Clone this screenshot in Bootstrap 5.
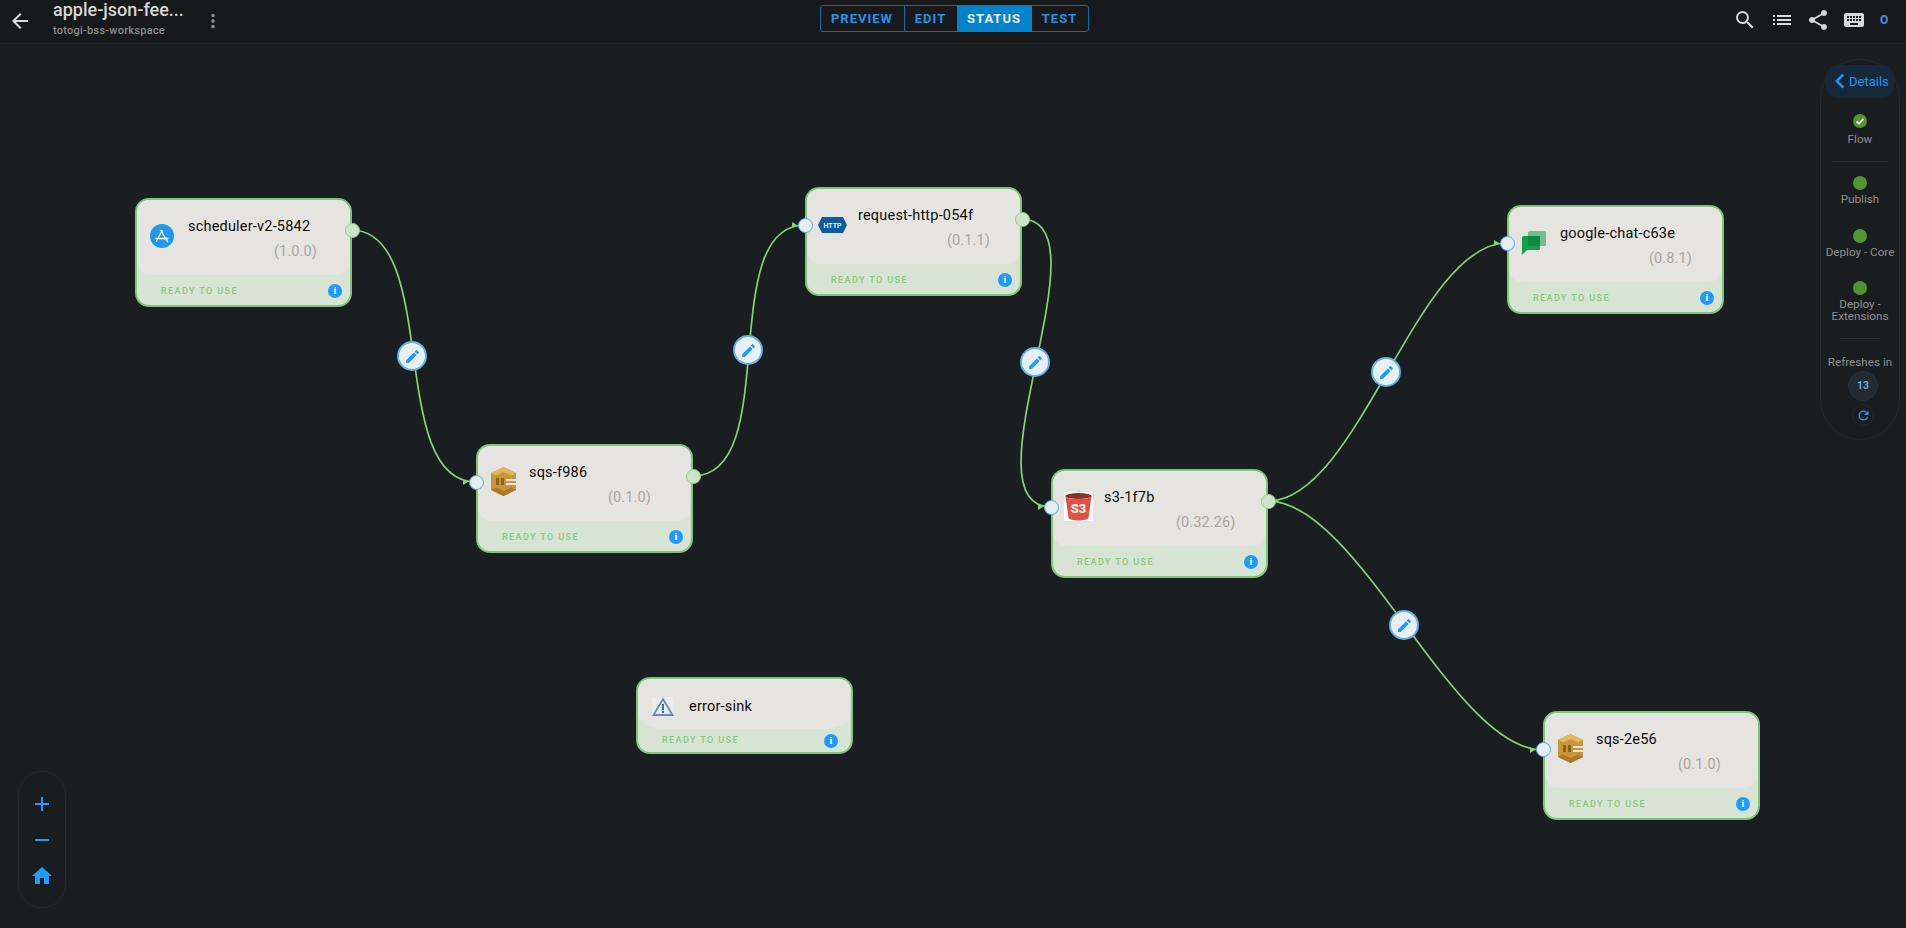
<!DOCTYPE html>
<html lang="en">
<head>
<meta charset="utf-8">
<title>apple-json-feed</title>
<link href="https://cdn.jsdelivr.net/npm/bootstrap@5.3.0/dist/css/bootstrap.min.css" rel="stylesheet">
<style>
html,body{height:100%;overflow:hidden}
body{background:#1b1e20;font-family:Roboto,"Liberation Sans",sans-serif;color:#ddd}
.topbar{height:44px;background:#17191b;border-bottom:1px solid #25282a;flex:none}
.top-side{flex:1 1 0;min-width:0}
.left-side{margin-top:-2px}
.back-btn{width:24px;height:24px;margin-left:8px;color:#dcdcdc}
.app-head{margin-left:21px;width:147px}
.app-name{font-size:18px;font-weight:500;line-height:20px;color:#d6d6d6;margin-top:-4px;white-space:nowrap}
.app-space{font-size:11px;font-weight:500;letter-spacing:.25px;line-height:14px;color:#8c8c8c;margin-top:4px;white-space:nowrap}
.more-btn{width:22px;height:22px;color:#8d8d8d;margin-left:2px}
.mode-group{margin-left:18px;margin-top:-7px}
.mode-group .btn{font-size:13px;font-weight:700;letter-spacing:1px;color:#2392e6;border-color:#0b6ea8;background:transparent;padding:0;height:27px;line-height:25px;border-radius:3px;box-shadow:none}
.mode-group .btn.active{background:#0382cc;border-color:#0382cc;color:#e8f0f6}
.w-preview{width:85px}.w-edit{width:54px}.w-status{width:75px}.w-test{width:58px}
.top-icons{gap:12px;padding-right:16px;color:#d8d8d8;margin-top:-4px}
.top-icons svg{width:24px;height:24px;display:block}
.top-icons svg.search-ico{margin-right:1px}
.user-mark{font-size:12px;font-weight:700;color:#4d8fe8;width:10px;margin-left:2px}
.canvas{position:relative;flex:1 1 auto;overflow:hidden;background:#1b1e20}
.edges{position:absolute;left:0;top:0;width:1906px;height:884px}
.flow-node{position:absolute;width:217px;height:109px;background:#d8e4d3;border:2px solid #7cc576;border-radius:14px;color:#0c0c0c}
.node-top{height:75px;background:#e6e4e0;border-radius:12px 12px 14px 14px;padding:0 0 0 10px}
.node-low{height:30px;padding:2px 8px 0 24px}
.n-icon{width:30px;height:100%;margin-right:11px;padding-bottom:4px}
.n-title{font-size:14.5px;line-height:18px;letter-spacing:.2px;margin-top:18px;white-space:nowrap}
.n-ver{font-size:14.5px;line-height:18px;letter-spacing:.1px;color:#aaa6a2;margin-top:7px;white-space:nowrap}
.ready{font-size:9px;font-weight:500;letter-spacing:1.4px;color:#86c97f;line-height:12px}
.info-dot{width:14px;height:14px;border-radius:50%;background:#1e9bff;color:#fff;font:700 10px/14px "Liberation Serif",serif;text-align:center}
.port{position:absolute;width:15px;height:15px;border-radius:50%;z-index:2}
.port-out{right:-9.5px;top:22.5px;background:#cfe3c9;border:1.5px solid #8fce87}
.port-in{left:-9.5px;top:28.5px;background:#e6eef2;border:1.5px solid #56a8e0}
.edit-btn{position:absolute;width:30px;height:30px;border-radius:50%;background:#e8f0f6;border:2px solid #5fb0ea;color:#1e9bff}
.edit-btn svg{width:17px;height:17px}
.error-node{height:77px}
.error-node .node-top{height:50px;border-radius:12px 12px 30px 30px / 12px 12px 14px 14px;padding-top:5px}
.error-node .n-icon{padding-bottom:0}
.error-node .node-low{height:23px;align-items:flex-start!important;padding:5px 13px 0 24px}
.error-node .n-title{margin-top:0}
.ver-a{padding-left:86px}.ver-b{padding-left:79px}.ver-c{padding-left:89px}.ver-d{padding-left:72px}.ver-e{padding-left:82px}
.p1{left:135px;top:154px}.p2{left:476px;top:400px}.p3{left:805px;top:143px}.p4{left:1051px;top:425px}.p5{left:1507px;top:161px}.p6{left:1543px;top:667px}.p7{left:636px;top:633px}
.e1{left:397px;top:297px}.e2{left:733px;top:291px}.e3{left:1020px;top:303px}.e4{left:1371px;top:313px}.e5{left:1389px;top:566px}
.side-panel{position:absolute;left:1820px;top:15px;width:80px;height:381px;border:1px solid #26292b;border-radius:40px;background:#1a1d1f;color:#8f8f8f;font-size:11.7px;line-height:12px;text-align:center}
.details-btn{width:68px;height:33px;margin:5px auto 0;border-radius:12px;background:#16293a;color:#2196f3;font-size:13px;line-height:33px;white-space:nowrap;text-align:left;padding-left:6px}
.details-btn svg{width:16px;height:20px;margin-right:1px;vertical-align:-5px}
.step-dot{width:14px;height:14px;border-radius:50%;background:#52942f;margin:0 auto 3px;color:#fff}
.step-dot svg{display:block;width:14px;height:14px}
.step-a{padding-top:16px}
.step-a .step-dot{margin-bottom:5px}
.step-b{padding-top:14px}
.step-c{padding-top:24px}
.step-d{padding-top:23px}
.rule-a{width:56px;height:1px;background:#2b2e30;margin:16px auto 0}
.rule-b{width:40px;height:1px;background:#2b2e30;margin:16px auto 0}
.refresh-lbl{padding-top:17px}
.count-ring{width:30px;height:30px;border-radius:50%;background:#232a30;border:1px solid #1e3344;color:#6fa8e8;font-size:10.5px;font-weight:700;line-height:28px;margin:3px 0 0 27px}
.refresh-btn{width:22px;height:22px;border-radius:50%;border:1px solid #25292c;color:#2196f3;margin:3px 0 0 31px}
.refresh-btn svg{width:15px;height:15px}
.zoom-panel{position:absolute;left:18px;top:727px;width:48px;height:137px;border:1px solid #25282a;border-radius:24px;background:#1a1d1f;color:#1e9bff;padding-top:20px}
.zoom-panel svg{display:block;width:24px;height:24px;margin:0 auto 12px}
</style>
</head>
<body class="d-flex flex-column">
<header class="topbar d-flex align-items-center">
  <div class="top-side left-side d-flex align-items-center">
    <svg class="back-btn" viewBox="0 0 24 24" fill="currentColor"><path d="M20 11H7.83l5.59-5.59L12 4l-8 8 8 8 1.41-1.41L7.83 13H20v-2z"/></svg>
    <div class="app-head">
      <div class="app-name">apple-json-fee...</div>
      <div class="app-space">totogi-bss-workspace</div>
    </div>
    <svg class="more-btn" viewBox="0 0 24 24" fill="currentColor"><path d="M12 8c1.1 0 2-.9 2-2s-.9-2-2-2-2 .9-2 2 .9 2 2 2zm0 2c-1.1 0-2 .9-2 2s.9 2 2 2 2-.9 2-2-.9-2-2-2zm0 6c-1.1 0-2 .9-2 2s.9 2 2 2 2-.9 2-2-.9-2-2-2z"/></svg>
  </div>
  <div class="btn-group mode-group" role="group">
    <button type="button" class="btn w-preview">PREVIEW</button>
    <button type="button" class="btn w-edit">EDIT</button>
    <button type="button" class="btn w-status active">STATUS</button>
    <button type="button" class="btn w-test">TEST</button>
  </div>
  <div class="top-side d-flex align-items-center justify-content-end top-icons">
    <svg class="search-ico" viewBox="0 0 24 24" fill="currentColor"><path d="M15.5 14h-.79l-.28-.27A6.47 6.47 0 0 0 16 9.5 6.5 6.5 0 1 0 9.5 16c1.61 0 3.09-.59 4.23-1.57l.27.28v.79l5 4.99L20.49 19l-4.99-5zm-6 0C7.01 14 5 11.99 5 9.5S7.01 5 9.5 5 14 7.01 14 9.5 11.99 14 9.5 14z"/></svg>
    <svg viewBox="0 0 24 24" fill="currentColor"><path d="M3 13h2v-2H3v2zm0 4h2v-2H3v2zm0-8h2V7H3v2zm4 4h14v-2H7v2zm0 4h14v-2H7v2zM7 7v2h14V7H7z"/></svg>
    <svg viewBox="0 0 24 24" fill="currentColor"><path d="M18 16.08c-.76 0-1.44.3-1.96.77L8.91 12.7c.05-.23.09-.46.09-.7s-.04-.47-.09-.7l7.05-4.11c.54.5 1.25.81 2.04.81 1.66 0 3-1.34 3-3s-1.34-3-3-3-3 1.34-3 3c0 .24.04.47.09.7L8.04 9.81C7.5 9.31 6.79 9 6 9c-1.66 0-3 1.34-3 3s1.34 3 3 3c.79 0 1.5-.31 2.04-.81l7.12 4.16c-.05.21-.08.43-.08.65 0 1.61 1.31 2.92 2.92 2.92 1.61 0 2.92-1.31 2.92-2.92s-1.31-2.92-2.92-2.92z"/></svg>
    <svg viewBox="0 0 24 24" fill="currentColor"><path d="M20 5H4c-1.1 0-1.99.9-1.99 2L2 17c0 1.1.9 2 2 2h16c1.1 0 2-.9 2-2V7c0-1.1-.9-2-2-2zm-9 3h2v2h-2V8zm0 3h2v2h-2v-2zM8 8h2v2H8V8zm0 3h2v2H8v-2zm-1 2H5v-2h2v2zm0-3H5V8h2v2zm9 7H8v-2h8v2zm0-4h-2v-2h2v2zm0-3h-2V8h2v2zm3 3h-2v-2h2v2zm0-3h-2V8h2v2z"/></svg>
    <span class="user-mark">O</span>
  </div>
</header>
<main class="canvas">
  <svg class="edges" viewBox="0 44 1906 884" fill="none" stroke="#82d276" stroke-width="1.7">
    <path d="M351 230C441 230 386 482 476 482"/>
    <path d="M693 476C783 476 715 225 805 225"/>
    <path d="M1021 219C1111 219 961 507 1051 507"/>
    <path d="M1268 501C1358 501 1417 243 1507 243"/>
    <path d="M1268 501C1358 501 1453 750 1543 750"/>
    <g fill="#82d276" stroke="none">
      <path d="M463 479l5 3-5 3z"/><path d="M792 222l5 3-5 3z"/><path d="M1038 504l5 3-5 3z"/><path d="M1494 240l5 3-5 3z"/><path d="M1530 747l5 3-5 3z"/>
    </g>
  </svg>

  <div class="flow-node p1">
    <span class="port port-out"></span>
    <div class="node-top d-flex">
      <div class="n-icon d-flex align-items-center justify-content-center">
        <svg width="24" height="24" viewBox="0 0 24 24"><circle cx="12" cy="12" r="12" fill="#2196f3"/><path d="M12.5 6 7 16M10.5 6l6 10M5.5 14.5h13M16.5 16l1.5 2M7 16l-1 2" stroke="#fff" stroke-width="1.3" fill="none"/></svg>
      </div>
      <div><div class="n-title">scheduler-v2-5842</div><div class="n-ver ver-a">(1.0.0)</div></div>
    </div>
    <div class="node-low d-flex align-items-center justify-content-between"><span class="ready">READY TO USE</span><span class="info-dot">i</span></div>
  </div>

  <div class="flow-node p2">
    <span class="port port-in"></span><span class="port port-out"></span>
    <div class="node-top d-flex">
      <div class="n-icon d-flex align-items-center justify-content-center">
        <svg width="25" height="29" viewBox="0 0 25 29"><path d="M12.5 0 25 6v17l-12.500 6L0 23V6z" fill="#c9953a"/><path d="M12.500 0 25 6l-5 2.500-7.500-3.500-7.500 3.500L0 6z" fill="#e0b65e"/><path d="M0 23l5-2.500 7.500 3.500 7.500-3.500 5 2.500-12.500 6z" fill="#a87a2a"/><path d="M5 11h3v7H5zM10 11h3v7h-3z" fill="#8a6420"/><path d="M15 12h10v2H15zM15 16h10v2H15z" fill="#e6e4e0"/></svg>
      </div>
      <div><div class="n-title">sqs-f986</div><div class="n-ver ver-b">(0.1.0)</div></div>
    </div>
    <div class="node-low d-flex align-items-center justify-content-between"><span class="ready">READY TO USE</span><span class="info-dot">i</span></div>
  </div>

  <div class="flow-node p3">
    <span class="port port-in"></span><span class="port port-out"></span>
    <div class="node-top d-flex">
      <div class="n-icon d-flex align-items-center justify-content-center">
        <svg width="29" height="16" viewBox="0 0 29 16"><path d="M4 0h21l4 8-4 8H4L0 8z" fill="#0a5c9e"/><text x="14.500" y="10.500" text-anchor="middle" font-family="Roboto,sans-serif" font-size="7" font-weight="700" fill="#e6f0f8">HTTP</text></svg>
      </div>
      <div><div class="n-title">request-http-054f</div><div class="n-ver ver-c">(0.1.1)</div></div>
    </div>
    <div class="node-low d-flex align-items-center justify-content-between"><span class="ready">READY TO USE</span><span class="info-dot">i</span></div>
  </div>

  <div class="flow-node p4">
    <span class="port port-in"></span><span class="port port-out"></span>
    <div class="node-top d-flex">
      <div class="n-icon d-flex align-items-center justify-content-center">
        <svg width="29" height="29" viewBox="0 0 29 29"><rect width="29" height="29" fill="#fff"/><ellipse cx="14.500" cy="4" rx="13" ry="3" fill="#8c3123"/><path d="M1.500 4c1 2 5 3 13 3s12-1 13-3l-3 22c-1 1.500-5 2.500-10 2.500s-9-1-10-2.500z" fill="#e05243"/><text x="14.500" y="21" text-anchor="middle" font-family="Roboto,sans-serif" font-size="13" font-weight="900" fill="#f6ece8">S3</text></svg>
      </div>
      <div><div class="n-title">s3-1f7b</div><div class="n-ver ver-d">(0.32.26)</div></div>
    </div>
    <div class="node-low d-flex align-items-center justify-content-between"><span class="ready">READY TO USE</span><span class="info-dot">i</span></div>
  </div>

  <div class="flow-node p5">
    <span class="port port-in"></span>
    <div class="node-top d-flex">
      <div class="n-icon d-flex align-items-center justify-content-center">
        <svg width="24" height="24" viewBox="0 0 24 24"><rect x="6" y="0" width="18" height="15" rx="1.500" fill="#6fbf8b"/><path d="M1.500 5h15A1.500 1.500 0 0 1 18 6.500v11a1.500 1.500 0 0 1-1.500 1.500H5l-5 5V6.500A1.500 1.500 0 0 1 1.500 5z" fill="#12a14b"/><path d="M6 5h12v10H6z" fill="#0d8a3e"/></svg>
      </div>
      <div><div class="n-title">google-chat-c63e</div><div class="n-ver ver-c">(0.8.1)</div></div>
    </div>
    <div class="node-low d-flex align-items-center justify-content-between"><span class="ready">READY TO USE</span><span class="info-dot">i</span></div>
  </div>

  <div class="flow-node p6">
    <span class="port port-in"></span>
    <div class="node-top d-flex">
      <div class="n-icon d-flex align-items-center justify-content-center">
        <svg width="25" height="29" viewBox="0 0 25 29"><path d="M12.5 0 25 6v17l-12.500 6L0 23V6z" fill="#c9953a"/><path d="M12.500 0 25 6l-5 2.500-7.500-3.500-7.500 3.500L0 6z" fill="#e0b65e"/><path d="M0 23l5-2.500 7.500 3.500 7.500-3.500 5 2.500-12.500 6z" fill="#a87a2a"/><path d="M5 11h3v7H5zM10 11h3v7h-3z" fill="#8a6420"/><path d="M15 12h10v2H15zM15 16h10v2H15z" fill="#e6e4e0"/></svg>
      </div>
      <div><div class="n-title">sqs-2e56</div><div class="n-ver ver-e">(0.1.0)</div></div>
    </div>
    <div class="node-low d-flex align-items-center justify-content-between"><span class="ready">READY TO USE</span><span class="info-dot">i</span></div>
  </div>

  <div class="flow-node error-node p7">
    <div class="node-top d-flex align-items-center">
      <div class="n-icon d-flex align-items-center justify-content-center">
        <svg width="22" height="19" viewBox="0 0 22 19"><rect width="22" height="19" fill="#ecebe9"/><path d="M11 2 20.500 18H1.500z" fill="none" stroke="#5f8cc4" stroke-width="1.800"/><path d="M10 7h2v6h-2zM10 14h2v2h-2z" fill="#3d6fb0"/></svg>
      </div>
      <div class="n-title">error-sink</div>
    </div>
    <div class="node-low d-flex align-items-center justify-content-between"><span class="ready">READY TO USE</span><span class="info-dot">i</span></div>
  </div>

  <div class="edit-btn e1 d-flex align-items-center justify-content-center"><svg viewBox="0 0 24 24" fill="currentColor"><path d="M3 17.250V21h3.750L17.810 9.940l-3.750-3.750L3 17.250zM20.710 7.040c.39-.39.39-1.020 0-1.410l-2.340-2.340c-.39-.39-1.020-.39-1.410 0l-1.830 1.830 3.750 3.750 1.830-1.830z"/></svg></div>
  <div class="edit-btn e2 d-flex align-items-center justify-content-center"><svg viewBox="0 0 24 24" fill="currentColor"><path d="M3 17.250V21h3.750L17.810 9.940l-3.750-3.750L3 17.250zM20.710 7.040c.39-.39.39-1.020 0-1.410l-2.340-2.340c-.39-.39-1.020-.39-1.410 0l-1.830 1.830 3.750 3.750 1.830-1.830z"/></svg></div>
  <div class="edit-btn e3 d-flex align-items-center justify-content-center"><svg viewBox="0 0 24 24" fill="currentColor"><path d="M3 17.250V21h3.750L17.810 9.940l-3.750-3.750L3 17.250zM20.710 7.040c.39-.39.39-1.020 0-1.410l-2.340-2.340c-.39-.39-1.020-.39-1.410 0l-1.830 1.830 3.750 3.750 1.830-1.830z"/></svg></div>
  <div class="edit-btn e4 d-flex align-items-center justify-content-center"><svg viewBox="0 0 24 24" fill="currentColor"><path d="M3 17.250V21h3.750L17.810 9.940l-3.750-3.750L3 17.250zM20.710 7.040c.39-.39.39-1.020 0-1.410l-2.340-2.340c-.39-.39-1.020-.39-1.410 0l-1.830 1.830 3.750 3.750 1.830-1.830z"/></svg></div>
  <div class="edit-btn e5 d-flex align-items-center justify-content-center"><svg viewBox="0 0 24 24" fill="currentColor"><path d="M3 17.250V21h3.750L17.810 9.940l-3.750-3.750L3 17.250zM20.710 7.040c.39-.39.39-1.020 0-1.410l-2.340-2.340c-.39-.39-1.020-.39-1.410 0l-1.830 1.830 3.750 3.750 1.830-1.830z"/></svg></div>

  <aside class="side-panel">
    <div class="details-btn"><svg viewBox="6 4 12 16" fill="currentColor"><path d="M15.410 7.410 14 6l-6 6 6 6 1.410-1.410L10.830 12z"/></svg>Details</div>
    <div class="step-a"><div class="step-dot"><svg viewBox="0 0 14 14" fill="none" stroke="#fff" stroke-width="1.800"><path d="M3.500 7.500 6 9.500l4.500-4.500"/></svg></div>Flow</div>
    <div class="rule-a"></div>
    <div class="step-b"><div class="step-dot"></div>Publish</div>
    <div class="step-c"><div class="step-dot"></div>Deploy - Core</div>
    <div class="step-d"><div class="step-dot"></div>Deploy -<br>Extensions</div>
    <div class="rule-b"></div>
    <div class="refresh-lbl">Refreshes in</div>
    <div class="count-ring">13</div>
    <div class="refresh-btn d-flex align-items-center justify-content-center"><svg viewBox="0 0 24 24" fill="currentColor"><path d="M17.650 6.350C16.200 4.900 14.210 4 12 4c-4.420 0-7.990 3.580-7.990 8s3.570 8 7.990 8c3.730 0 6.840-2.550 7.730-6h-2.080c-.82 2.330-3.040 4-5.650 4-3.310 0-6-2.690-6-6s2.690-6 6-6c1.660 0 3.140.69 4.220 1.780L13 11h7V4l-2.350 2.350z"/></svg></div>
  </aside>

  <aside class="zoom-panel">
    <svg viewBox="0 0 24 24" fill="currentColor"><path d="M19 13h-6v6h-2v-6H5v-2h6V5h2v6h6v2z"/></svg>
    <svg viewBox="0 0 24 24" fill="currentColor"><path d="M19 13H5v-2h14v2z"/></svg>
    <svg viewBox="0 0 24 24" fill="currentColor"><path d="M10 20v-6h4v6h5v-8h3L12 3 2 12h3v8z"/></svg>
  </aside>
</main>
<script src="https://cdn.jsdelivr.net/npm/bootstrap@5.3.0/dist/js/bootstrap.bundle.min.js"></script>
</body>
</html>
